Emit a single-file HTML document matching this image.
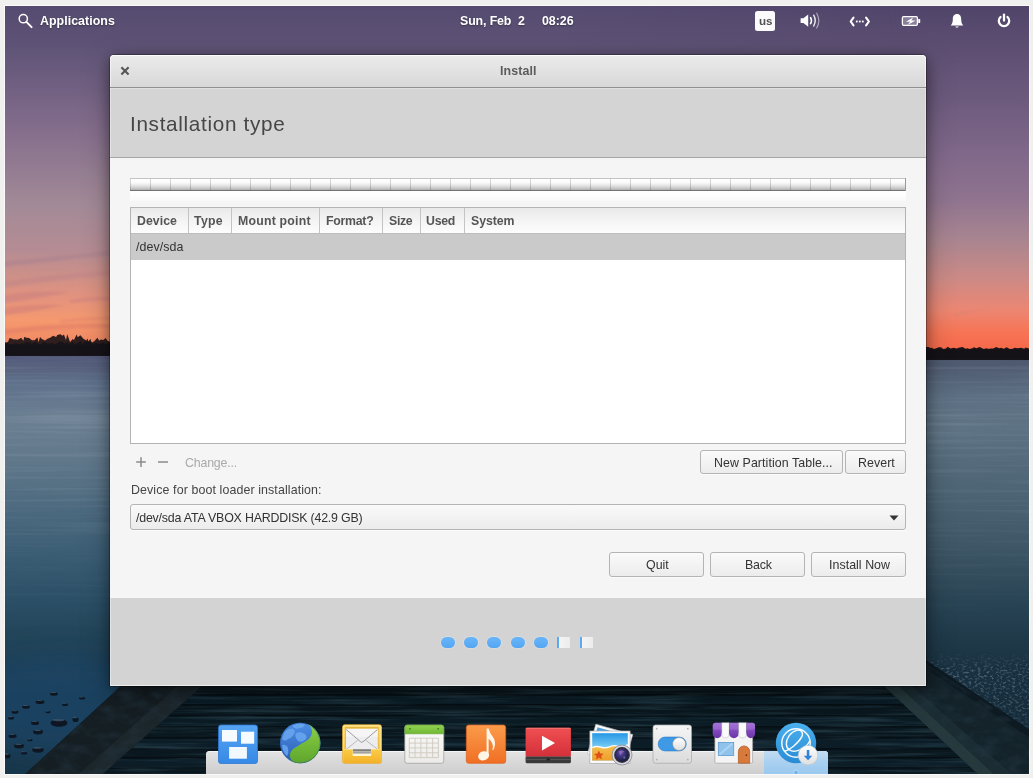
<!DOCTYPE html>
<html>
<head>
<meta charset="utf-8">
<title>Install</title>
<style>
html,body{margin:0;padding:0;}
body{width:1033px;height:778px;overflow:hidden;background:#f0f0ef;font-family:"Liberation Sans",sans-serif;position:relative;}
#desk{position:absolute;left:5px;top:6px;width:1024px;height:768px;overflow:hidden;background:#24384a;box-shadow:0 0 0 1px #fafafa;}
#in{position:absolute;left:-5px;top:-6px;width:1033px;height:778px;}
#wall{position:absolute;left:0;top:0;}
.abs{position:absolute;}
/* panel */
.ptext{position:absolute;color:#fff;font-weight:bold;font-size:12px;line-height:16px;white-space:nowrap;text-shadow:0 1px 2px rgba(0,0,0,.45);}
/* window */
#win{position:absolute;left:110px;top:55px;width:816px;height:631px;border-radius:4px 4px 1.5px 1.5px;background:#f5f5f5;box-shadow:0 0 0 1px rgba(0,0,0,.28),0 3px 14px rgba(0,0,0,.4),0 8px 30px rgba(0,0,0,.28);overflow:hidden;}
#tbar{position:absolute;left:0;top:0;width:816px;height:32px;background:linear-gradient(#ebebeb,#d8d8d8);border-bottom:1px solid #909090;box-sizing:content-box;box-shadow:inset 0 1px 0 #fcfcfc,inset 1px 0 0 rgba(255,255,255,.55),inset -1px 0 0 rgba(255,255,255,.55);border-radius:4px 4px 0 0;}
#head{position:absolute;left:0;top:33px;width:816px;height:69px;background:#d4d4d4;border-bottom:1px solid #a6a6a6;box-shadow:inset 0 1px 0 rgba(255,255,255,.25),inset 1px 0 0 rgba(255,255,255,.35),inset -1px 0 0 rgba(255,255,255,.35);}
#foot{position:absolute;left:0;top:543px;width:816px;height:88px;background:#d3d3d3;box-shadow:inset 0 -1px 0 rgba(255,255,255,.6),inset 1px 0 0 rgba(255,255,255,.4),inset -1px 0 0 rgba(255,255,255,.4);}
.t{position:absolute;white-space:nowrap;color:#333;font-size:12.5px;line-height:16px;will-change:transform;}
.btn{position:absolute;box-sizing:border-box;border:1px solid #b4b4b4;border-radius:3px;background:linear-gradient(#fafafa,#ececec);color:#333;font-size:12.5px;text-align:center;white-space:nowrap;box-shadow:0 1px 0 rgba(255,255,255,.6);}
</style>
</head>
<body>
<div id="desk"><div id="in">

<!-- WALLPAPER -->
<svg id="wall" width="1033" height="778" viewBox="0 0 1033 778">
<defs>
<linearGradient id="sky" gradientUnits="userSpaceOnUse" x1="0" y1="6" x2="0" y2="346">
<stop offset="0" stop-color="#554b70"/>
<stop offset="0.115" stop-color="#5e5376"/>
<stop offset="0.335" stop-color="#806a8a"/>
<stop offset="0.585" stop-color="#a28a97"/>
<stop offset="0.718" stop-color="#b58c94"/>
<stop offset="0.79" stop-color="#cc9088"/>
<stop offset="0.865" stop-color="#e6937d"/>
<stop offset="0.925" stop-color="#f5996e"/>
<stop offset="1" stop-color="#f28762"/>
</linearGradient>
<linearGradient id="skyR" gradientUnits="userSpaceOnUse" x1="0" y1="6" x2="0" y2="350">
<stop offset="0" stop-color="#50446a"/>
<stop offset="0.1" stop-color="#5b4d70"/>
<stop offset="0.27" stop-color="#6c5a7d"/>
<stop offset="0.45" stop-color="#826a8b"/>
<stop offset="0.565" stop-color="#90748f"/>
<stop offset="0.68" stop-color="#a98590"/>
<stop offset="0.795" stop-color="#cd8a85"/>
<stop offset="0.885" stop-color="#ec8672"/>
<stop offset="0.945" stop-color="#f67556"/>
<stop offset="1" stop-color="#f5694a"/>
</linearGradient>
<linearGradient id="rfade" x1="0" y1="0" x2="1" y2="0">
<stop offset="0" stop-color="#fff" stop-opacity="0"/>
<stop offset="0.55" stop-color="#fff" stop-opacity="0"/>
<stop offset="0.9" stop-color="#fff" stop-opacity="1"/>
</linearGradient>
<mask id="rmask"><rect x="0" y="0" width="1033" height="778" fill="url(#rfade)"/></mask>
<linearGradient id="water" gradientUnits="userSpaceOnUse" x1="0" y1="354" x2="0" y2="700">
<stop offset="0" stop-color="#52587a"/>
<stop offset="0.04" stop-color="#58627e"/>
<stop offset="0.08" stop-color="#5e708b"/>
<stop offset="0.19" stop-color="#6b7f92"/>
<stop offset="0.3" stop-color="#61788b"/>
<stop offset="0.42" stop-color="#506c81"/>
<stop offset="0.57" stop-color="#3c5e75"/>
<stop offset="0.71" stop-color="#2b4f66"/>
<stop offset="0.855" stop-color="#204155"/>
<stop offset="1" stop-color="#18364a"/>
</linearGradient>
<linearGradient id="waterR" gradientUnits="userSpaceOnUse" x1="0" y1="358" x2="0" y2="700">
<stop offset="0" stop-color="#4c566c"/>
<stop offset="0.12" stop-color="#5e7184"/>
<stop offset="0.21" stop-color="#5d7283"/>
<stop offset="0.415" stop-color="#4a6272"/>
<stop offset="0.56" stop-color="#3d5565"/>
<stop offset="0.71" stop-color="#294454"/>
<stop offset="0.825" stop-color="#1f3949"/>
<stop offset="1" stop-color="#172d3c"/>
</linearGradient>
<clipPath id="pclip"><polygon points="202,686 884,686 982,778 98,778"/></clipPath>
<filter id="blur1"><feGaussianBlur stdDeviation="1.2"/></filter>
<filter id="blur3" x="-50%" y="-50%" width="200%" height="200%"><feGaussianBlur stdDeviation="14"/></filter>
<filter id="blur05"><feGaussianBlur stdDeviation=".6"/></filter>
<filter id="wood" x="0" y="0" width="100%" height="100%">
<feTurbulence type="fractalNoise" baseFrequency="0.01 0.3" numOctaves="3" seed="9"/>
<feColorMatrix type="matrix" values="0 0 0 0 0.09  0 0 0 0 0.22  0 0 0 0 0.29  0 0 0 2.6 -1.15"/>
</filter>
<filter id="wood2" x="0" y="0" width="100%" height="100%">
<feTurbulence type="fractalNoise" baseFrequency="0.05 0.09" numOctaves="3" seed="3"/>
<feColorMatrix type="matrix" values="0 0 0 0 0.02  0 0 0 0 0.04  0 0 0 0 0.06  0 0 0 2.4 -1.0"/>
</filter>
<clipPath id="bclip"><polygon points="121,686 202,686 98,778 21,778"/><polygon points="884,686 920,686 920,660 1033,734 1033,778 982,778"/></clipPath>
<filter id="ripple" x="0" y="0" width="100%" height="100%">
<feTurbulence type="fractalNoise" baseFrequency="0.006 0.3" numOctaves="2" seed="21"/>
<feColorMatrix type="matrix" values="0 0 0 0 0.78  0 0 0 0 0.84  0 0 0 0 0.92  0 0 0 2.2 -1.0"/>
</filter>
<linearGradient id="ripfade" gradientUnits="userSpaceOnUse" x1="0" y1="356" x2="0" y2="640">
<stop offset="0" stop-color="#fff" stop-opacity=".9"/><stop offset=".5" stop-color="#fff" stop-opacity=".6"/><stop offset="1" stop-color="#fff" stop-opacity="0"/>
</linearGradient>
<mask id="ripmask"><rect x="0" y="356" width="1033" height="290" fill="url(#ripfade)"/></mask>
<filter id="blur2"><feGaussianBlur stdDeviation="2.5"/></filter>
<filter id="grain" x="0" y="0" width="100%" height="100%">
<feTurbulence type="fractalNoise" baseFrequency="0.32 0.5" numOctaves="2" seed="4" result="n"/>
<feColorMatrix type="matrix" values="0 0 0 0 0.42  0 0 0 0 0.53  0 0 0 0 0.64  0 0 0 3.2 -1.55"/>
</filter>
<linearGradient id="pebfade" gradientUnits="userSpaceOnUse" x1="0" y1="652" x2="0" y2="745">
<stop offset="0" stop-color="#fff" stop-opacity="0"/><stop offset=".22" stop-color="#fff" stop-opacity="1"/><stop offset=".6" stop-color="#fff" stop-opacity=".8"/><stop offset="1" stop-color="#fff" stop-opacity=".15"/>
</linearGradient>
<mask id="pebmask"><rect x="900" y="640" width="140" height="120" fill="url(#pebfade)"/></mask>
</defs>
<!-- sky -->
<rect x="0" y="0" width="1033" height="360" fill="url(#sky)"/>
<rect x="0" y="0" width="1033" height="360" fill="url(#skyR)" mask="url(#rmask)"/>
<!-- cloud streaks left -->
<g filter="url(#blur1)" opacity=".55">
<path d="M0 262 Q40 258 118 250 L118 254 Q50 262 0 267Z" fill="#a9828f"/>
<path d="M0 282 Q50 274 118 270 L118 274 Q60 280 0 288Z" fill="#c18589"/>
<path d="M0 296 Q30 290 70 292 Q40 298 0 304Z" fill="#c9807f"/>
<path d="M0 308 Q40 303 65 305 Q40 311 0 316Z" fill="#d27f78"/>
<path d="M70 300 Q95 296 118 297 L118 300 Q95 300 70 303Z" fill="#cf827c"/>
<path d="M0 330 Q60 322 118 324 L118 328 Q60 327 0 335Z" fill="#e07b68"/>
<path d="M60 320 Q90 316 118 317 L118 320 Q90 320 60 323Z" fill="#e5846e"/>
</g>
<path d="M955 314 Q975 309 990 308 Q975 311 955 316Z" fill="#d98273" opacity=".7" filter="url(#blur1)"/>
<!-- water -->
<rect x="0" y="352" width="1033" height="426" fill="url(#water)"/>
<rect x="0" y="352" width="1033" height="426" fill="url(#waterR)" mask="url(#rmask)"/>
<ellipse cx="60" cy="705" rx="110" ry="50" fill="#1b4a6e" opacity=".6" filter="url(#blur3)"/>
<g mask="url(#ripmask)"><rect x="0" y="356" width="120" height="290" filter="url(#ripple)" opacity=".16"/><rect x="915" y="356" width="118" height="290" filter="url(#ripple)" opacity=".13"/></g>
<!-- trees -->
<path d="M0 356 L0.0 341.8 L2.1 341.2 L4.3 339.9 L5.4 342.9 L8.1 341.7 L9.6 337.9 L11.5 338.5 L13.5 339.4 L14.8 339.3 L17.5 339.7 L20.0 338.5 L21.1 337.7 L23.3 340.8 L24.4 336.7 L26.3 337.7 L29.1 337.9 L31.9 340.3 L34.5 340.2 L37.4 337.5 L38.6 342.2 L40.0 337.0 L41.9 339.0 L43.5 339.7 L45.2 340.6 L47.4 338.8 L50.2 337.7 L53.1 335.8 L56.1 337.0 L57.4 335.1 L60.3 334.2 L62.5 335.8 L63.9 334.5 L66.0 340.1 L67.2 334.2 L70.1 342.1 L72.7 338.9 L74.0 340.1 L76.6 334.6 L77.7 337.2 L78.8 336.4 L80.4 335.2 L83.4 338.8 L86.4 340.6 L87.5 338.6 L88.6 341.6 L90.4 338.8 L91.7 342.7 L94.5 341.0 L97.4 337.7 L99.1 340.4 L101.2 339.5 L103.4 340.0 L105.6 338.1 L107.6 340.8 L110.1 341.8 L111.7 338.1 L113.7 340.2 L114.7 340.9 L116.9 342.9 L118 356 Z" fill="#1f1518" opacity=".93"/>
<path d="M0 356 L0.0 344.0 L2.3 344.2 L4.3 344.3 L5.5 342.3 L6.6 343.1 L8.1 343.5 L9.7 344.1 L11.9 344.3 L13.0 344.5 L14.3 343.5 L16.5 343.5 L17.5 343.8 L19.9 344.3 L21.7 343.3 L23.5 343.4 L25.4 342.9 L27.3 341.6 L29.0 344.1 L29.9 341.6 L31.5 343.9 L33.8 342.8 L35.8 342.0 L37.0 343.5 L39.2 344.1 L41.2 344.2 L43.1 342.5 L45.5 341.9 L47.1 343.9 L48.1 342.8 L49.7 344.3 L52.0 342.7 L53.9 343.7 L55.1 344.5 L56.4 343.4 L57.9 342.9 L60.0 340.7 L61.1 342.8 L62.2 341.6 L64.6 343.6 L66.6 343.1 L67.4 341.0 L68.7 343.7 L70.2 343.4 L71.7 342.5 L73.2 341.9 L74.4 344.1 L75.4 344.0 L77.0 343.0 L79.1 342.4 L81.0 340.7 L81.9 344.4 L83.0 343.1 L84.7 341.9 L86.0 341.2 L86.8 341.7 L88.0 341.7 L88.8 341.4 L90.8 341.5 L92.6 344.0 L94.9 343.3 L95.9 342.9 L97.5 343.3 L98.5 344.2 L100.2 343.4 L101.2 343.4 L103.2 342.8 L104.7 343.6 L106.1 344.0 L107.2 343.5 L108.2 342.8 L110.1 343.1 L111.0 343.7 L112.5 344.3 L114.8 342.8 L116.4 342.9 L117.5 344.0 L118 356 Z" fill="#17141a"/>
<rect x="0" y="345" width="118" height="10" fill="#151318"/>
<path d="M915 360 L915.0 347.6 L917.7 347.3 L920.9 347.4 L924.0 348.9 L926.2 346.9 L928.7 347.0 L930.0 348.0 L931.7 347.8 L934.0 349.0 L935.6 348.4 L938.7 347.3 L940.2 347.2 L941.6 347.6 L943.0 349.0 L946.0 348.5 L947.6 346.8 L950.6 348.4 L953.8 347.8 L956.4 348.5 L959.6 347.5 L962.8 347.0 L964.5 348.2 L966.0 348.7 L967.2 348.3 L969.7 349.0 L972.3 348.3 L974.0 347.2 L976.2 348.3 L978.4 347.4 L979.6 346.9 L980.7 347.4 L983.7 349.0 L986.5 348.2 L988.9 349.0 L990.1 348.6 L993.3 348.6 L996.1 347.0 L999.2 348.2 L1001.1 347.8 L1003.9 348.8 L1006.7 347.2 L1009.7 348.9 L1012.8 348.8 L1014.7 347.7 L1017.8 348.3 L1021.0 347.8 L1022.7 348.3 L1024.2 348.8 L1025.7 347.5 L1029.0 348.6 L1030.2 346.8 L1032.4 348.1 L1033 360 Z" fill="#1d1518"/>
<rect x="915" y="349.5" width="118" height="10" fill="#151217"/>
<!-- pebbles right -->
<g mask="url(#pebmask)"><rect x="926" y="650" width="110" height="96" fill="#152c3c" opacity=".45"/><rect x="926" y="650" width="110" height="96" filter="url(#grain)" opacity=".38"/></g>
<!-- rocks left -->
<g filter="url(#blur05)"><ellipse cx="54.0" cy="694.0" rx="4.0" ry="1.8" fill="#0b1722"/><ellipse cx="53.5" cy="692.6" rx="2.8" ry="0.5" fill="#5d7f99" opacity=".5"/><ellipse cx="40.0" cy="702.0" rx="4.5" ry="2.0" fill="#0b1722"/><ellipse cx="39.5" cy="700.5" rx="3.1" ry="0.6" fill="#5d7f99" opacity=".5"/><ellipse cx="65.0" cy="704.5" rx="3.0" ry="1.6" fill="#0b1722"/><ellipse cx="64.5" cy="703.3" rx="2.1" ry="0.5" fill="#5d7f99" opacity=".5"/><ellipse cx="82.0" cy="698.0" rx="3.0" ry="1.5" fill="#0b1722"/><ellipse cx="81.5" cy="696.9" rx="2.1" ry="0.5" fill="#5d7f99" opacity=".5"/><ellipse cx="26.0" cy="707.0" rx="4.0" ry="1.8" fill="#0b1722"/><ellipse cx="25.5" cy="705.6" rx="2.8" ry="0.5" fill="#5d7f99" opacity=".5"/><ellipse cx="15.0" cy="712.0" rx="3.5" ry="1.7" fill="#0b1722"/><ellipse cx="14.5" cy="710.7" rx="2.4" ry="0.5" fill="#5d7f99" opacity=".5"/><ellipse cx="59.0" cy="723.0" rx="8.5" ry="3.8" fill="#0b1722"/><ellipse cx="58.5" cy="720.1" rx="5.9" ry="1.1" fill="#5d7f99" opacity=".5"/><ellipse cx="75.5" cy="719.5" rx="3.0" ry="2.6" fill="#0b1722"/><ellipse cx="75.0" cy="717.5" rx="2.1" ry="0.8" fill="#5d7f99" opacity=".5"/><ellipse cx="11.0" cy="718.0" rx="3.0" ry="1.6" fill="#0b1722"/><ellipse cx="10.5" cy="716.8" rx="2.1" ry="0.5" fill="#5d7f99" opacity=".5"/><ellipse cx="35.0" cy="723.0" rx="4.0" ry="2.0" fill="#0b1722"/><ellipse cx="34.5" cy="721.5" rx="2.8" ry="0.6" fill="#5d7f99" opacity=".5"/><ellipse cx="38.0" cy="732.0" rx="5.0" ry="2.4" fill="#0b1722"/><ellipse cx="37.5" cy="730.2" rx="3.5" ry="0.7" fill="#5d7f99" opacity=".5"/><ellipse cx="12.6" cy="736.0" rx="4.0" ry="2.0" fill="#0b1722"/><ellipse cx="12.1" cy="734.5" rx="2.8" ry="0.6" fill="#5d7f99" opacity=".5"/><ellipse cx="19.0" cy="746.0" rx="5.0" ry="2.4" fill="#0b1722"/><ellipse cx="18.5" cy="744.2" rx="3.5" ry="0.7" fill="#5d7f99" opacity=".5"/><ellipse cx="38.0" cy="750.0" rx="6.0" ry="2.8" fill="#0b1722"/><ellipse cx="37.5" cy="747.9" rx="4.2" ry="0.8" fill="#5d7f99" opacity=".5"/><ellipse cx="7.5" cy="756.0" rx="3.0" ry="2.5" fill="#0b1722"/><ellipse cx="7.0" cy="754.1" rx="2.1" ry="0.8" fill="#5d7f99" opacity=".5"/><ellipse cx="24.0" cy="753.0" rx="3.0" ry="1.6" fill="#0b1722"/><ellipse cx="23.5" cy="751.8" rx="2.1" ry="0.5" fill="#5d7f99" opacity=".5"/><ellipse cx="48.0" cy="712.0" rx="2.5" ry="1.2" fill="#0b1722"/><ellipse cx="47.5" cy="711.1" rx="1.8" ry="0.5" fill="#5d7f99" opacity=".5"/><ellipse cx="30.0" cy="740.0" rx="2.5" ry="1.3" fill="#0b1722"/><ellipse cx="29.5" cy="739.0" rx="1.8" ry="0.5" fill="#5d7f99" opacity=".5"/></g>
<!-- pier -->
<polygon points="121,686 930,686 1033,736 1033,778 21,778" fill="#0b171d"/>
<g clip-path="url(#pclip)">
<rect x="90" y="686" width="900" height="92" fill="#0a171e"/>
<rect x="90" y="696" width="900" height="8" fill="#0d212b" opacity=".55"/>
<rect x="90" y="717" width="900" height="9" fill="#0d222c" opacity=".5"/>
<rect x="90" y="739" width="900" height="9" fill="#0d242f" opacity=".5"/>
<rect x="90" y="759" width="900" height="8" fill="#0d242f" opacity=".5"/>
<rect x="90" y="694" width="900" height="1.4" fill="#03080b" opacity=".55"/><rect x="90" y="704" width="900" height="1.4" fill="#03080b" opacity=".55"/><rect x="90" y="715" width="900" height="1.4" fill="#03080b" opacity=".55"/><rect x="90" y="726" width="900" height="1.4" fill="#03080b" opacity=".55"/><rect x="90" y="737" width="900" height="1.4" fill="#03080b" opacity=".55"/><rect x="90" y="748" width="900" height="1.4" fill="#03080b" opacity=".55"/><rect x="90" y="757" width="900" height="1.4" fill="#03080b" opacity=".55"/><rect x="90" y="767" width="900" height="1.4" fill="#03080b" opacity=".55"/>
<rect x="90" y="686" width="900" height="92" filter="url(#wood)" opacity=".28"/>
</g>
<!-- left beam -->
<polygon points="121,686 202,686 98,778 21,778" fill="#151e23"/>
<polygon points="178,686 202,686 98,778 74,778" fill="#1c272c"/>
<!-- right beam -->
<polygon points="884,686 920,686 920,660 926,662 1033,734 1033,778 982,778" fill="#14232a"/>
<polygon points="884,686 899,686 998,778 982,778" fill="#263a3d"/>
<polygon points="899,686 912,686 1016,778 998,778" fill="#1b2d33"/>
<polygon points="920,656 1033,732 1033,740 920,665" fill="#0d1a22"/>
<g clip-path="url(#bclip)"><rect x="0" y="650" width="1033" height="128" filter="url(#wood2)" opacity=".5"/></g>
</svg>

<!-- PANEL -->
<svg class="abs" style="left:0;top:0" width="1033" height="40" viewBox="0 0 1033 40">
<g fill="none" stroke="#fff" stroke-linecap="round">
<!-- search -->
<circle cx="23.3" cy="18.7" r="4.1" stroke-width="1.5"/>
<path d="M26.4 21.9 L31.6 27.1" stroke-width="2"/>
</g>
<!-- us -->
<rect x="755" y="11" width="20" height="20" rx="2.5" fill="#fbfbfb"/>
<!-- volume -->
<g fill="#fff">
<path d="M800.6 18.2 h2.8 l4.8 -3.8 v12.4 l-4.8 -3.8 h-2.8z"/>
</g>
<g fill="none" stroke="#fff" stroke-linecap="round">
<path d="M810.6 17.6 q1.7 3 0 6" stroke-width="1.6"/>
<path d="M813.7 15.2 q3 5.4 0 10.8" stroke-width="1.5" opacity=".85"/>
<path d="M816.7 13.2 q4.2 7.4 0 14.8" stroke-width="1.2" opacity=".5"/>
</g>
<!-- network -->
<g fill="none" stroke="#fff" stroke-width="2.1" stroke-linecap="round" stroke-linejoin="round">
<path d="M853.5 17.6 L850.7 21.5 L853.5 25.4"/>
<path d="M866.1 17.6 L868.9 21.5 L866.1 25.4"/>
</g>
<g fill="#fff"><rect x="855.9" y="20.6" width="1.8" height="1.8"/><rect x="858.9" y="20.6" width="1.8" height="1.8"/><rect x="861.9" y="20.6" width="1.8" height="1.8"/></g>
<!-- battery -->
<rect x="902.4" y="16.7" width="15" height="8.6" rx="1.2" fill="#fff" fill-opacity=".3" stroke="#fff" stroke-width="1.3"/>
<rect x="918.2" y="18.9" width="2" height="4.2" rx=".7" fill="#fff"/>
<path d="M913.3 17.2 L906 21.7 h4.2 l-2.7 3.4 L915.6 20.5 h-4.300z" fill="#fff"/>
<!-- bell -->
<path d="M957 14 c-3 0 -4.2 2.4 -4.2 5.2 c0 3.4 -0.8 4.6 -2 6.2 h12.4 c-1.2 -1.6 -2 -2.8 -2 -6.2 c0 -2.8 -1.2 -5.2 -4.2 -5.200z" fill="#fff"/>
<path d="M955.2 26.6 a1.9 1.7 0 0 0 3.6 0z" fill="#fff"/>
<!-- power -->
<g fill="none" stroke="#fff" stroke-width="2.3" stroke-linecap="round">
<path d="M1000.5 17 a5.2 5.2 0 1 0 7 0"/>
<path d="M1004 14.6 v6"/>
</g>
</svg>
<div class="t" style="left:40.4px;top:12.5px;font-size:12.4px;font-weight:bold;color:#fff;text-shadow:0 1px 2px rgba(0,0,0,.4);letter-spacing:0.04px;">Applications</div>
<div class="t" style="left:460.2px;top:12.6px;font-size:12.4px;font-weight:bold;color:#fff;text-shadow:0 1px 2px rgba(0,0,0,.4);letter-spacing:-0.13px;">Sun, Feb&nbsp;&nbsp;2</div>
<div class="t" style="left:542.4px;top:12.6px;font-size:12.4px;font-weight:bold;color:#fff;text-shadow:0 1px 2px rgba(0,0,0,.4);letter-spacing:-0.03px;">08:26</div>
<div class="t" style="left:758.6px;top:13.2px;font-size:11.6px;font-weight:bold;color:#505050;">us</div>

<!-- WINDOW -->
<div id="win">
 <div id="tbar"></div>
 <div id="head"></div>
 <div id="foot"></div>
</div>
<svg class="abs" style="left:120px;top:66px" width="10" height="10" viewBox="0 0 10 10"><path d="M1.4 1.3 L8.6 8.5 M8.6 1.3 L1.4 8.5" stroke="#555" stroke-width="2.1" fill="none"/></svg>
<div class="t" style="left:499.8px;top:63.4px;font-size:12.4px;font-weight:bold;color:#5c5c5c;letter-spacing:0.12px;">Install</div>
<div class="t" style="left:130.1px;top:109.8px;font-size:20.7px;line-height:28px;letter-spacing:.68px;color:#464646;">Installation type</div>
<div class="abs" style="left:130px;top:191px;width:776px;height:10px;background:linear-gradient(#fff,#fcfcfc 60%,#f8f8f8);"></div>
<div class="abs" style="left:130px;top:178px;width:776px;height:13px;box-sizing:border-box;border-top:1px solid #c4c4c4;border-bottom:1px solid #727272;background:repeating-linear-gradient(90deg,rgba(0,0,0,.16) 0,rgba(0,0,0,.16) 1px,transparent 1px,transparent 20px),linear-gradient(#ffffff,#fafafa 35%,#dadada 70%,#b2b2b2);"></div>
<div class="abs" style="left:905px;top:178px;width:1px;height:13px;background:#999;"></div>
<div class="abs" style="left:130px;top:207px;width:776px;height:237px;box-sizing:border-box;border:1px solid #b3b3b3;background:#fff;"></div>
<div class="abs" style="left:131px;top:208px;width:774px;height:25px;background:linear-gradient(#e9e9e9,#f3f3f3 45%,#fdfdfd);border-bottom:1px solid #bdbdbd;"></div>
<div class="abs" style="left:131px;top:234px;width:774px;height:26px;background:#cacaca;"></div>
<div class="abs" style="left:188px;top:208px;width:1px;height:25px;background:#c4c4c4;"></div>
<div class="abs" style="left:231px;top:208px;width:1px;height:25px;background:#c4c4c4;"></div>
<div class="abs" style="left:319px;top:208px;width:1px;height:25px;background:#c4c4c4;"></div>
<div class="abs" style="left:382px;top:208px;width:1px;height:25px;background:#c4c4c4;"></div>
<div class="abs" style="left:420px;top:208px;width:1px;height:25px;background:#c4c4c4;"></div>
<div class="abs" style="left:464px;top:208px;width:1px;height:25px;background:#c4c4c4;"></div>
<div class="t" style="left:136.7px;top:212.6px;font-size:12.3px;font-weight:bold;color:#555;letter-spacing:0.05px;">Device</div>
<div class="t" style="left:194.4px;top:212.6px;font-size:12.3px;font-weight:bold;color:#555;letter-spacing:0.30px;">Type</div>
<div class="t" style="left:237.8px;top:212.7px;font-size:12.3px;font-weight:bold;color:#555;letter-spacing:0.22px;">Mount point</div>
<div class="t" style="left:325.6px;top:212.6px;font-size:12.3px;font-weight:bold;color:#555;letter-spacing:-0.25px;">Format?</div>
<div class="t" style="left:388.5px;top:212.6px;font-size:12.3px;font-weight:bold;color:#555;letter-spacing:-0.30px;">Size</div>
<div class="t" style="left:426.4px;top:212.6px;font-size:12.3px;font-weight:bold;color:#555;letter-spacing:-0.25px;">Used</div>
<div class="t" style="left:470.5px;top:212.6px;font-size:12.3px;font-weight:bold;color:#555;letter-spacing:-0.05px;">System</div>
<div class="t" style="left:136.1px;top:238.7px;font-size:12.4px;font-weight:normal;color:#333;letter-spacing:0.07px;">/dev/sda</div>
<svg class="abs" style="left:134px;top:455px" width="40" height="14" viewBox="0 0 40 14"><path d="M7 2.3 v9.6 M2.2 7.1 h9.6 M24 7.1 h10" stroke="#8a8a8a" stroke-width="1.5" fill="none"/></svg>
<div class="t" style="left:184.7px;top:454.6px;font-size:12.4px;font-weight:normal;color:#aaa;letter-spacing:-0.20px;">Change...</div>
<div class="t" style="left:130.5px;top:481.8px;font-size:12.4px;font-weight:normal;color:#444;letter-spacing:0.11px;">Device for boot loader installation:</div>
<div class="btn" style="left:700px;top:450px;width:143px;height:24px;"></div>
<div class="btn" style="left:845px;top:450px;width:61px;height:24px;"></div>
<div class="t" style="left:713.5px;top:454.6px;font-size:12.4px;font-weight:normal;color:#333;letter-spacing:0.08px;">New Partition Table...</div>
<div class="t" style="left:857.7px;top:454.6px;font-size:12.4px;font-weight:normal;color:#333;letter-spacing:0.06px;">Revert</div>
<div class="btn" style="left:130px;top:504px;width:776px;height:26px;"></div>
<div class="t" style="left:135.6px;top:510.0px;font-size:12.4px;font-weight:normal;color:#333;letter-spacing:-0.20px;">/dev/sda ATA VBOX HARDDISK (42.9 GB)</div>
<svg class="abs" style="left:888px;top:513.5px" width="12" height="8" viewBox="0 0 12 8"><path d="M1.5 1.5 h9 l-4.5 5z" fill="#333"/></svg>
<div class="btn" style="left:609px;top:552px;width:95px;height:25px;"></div>
<div class="btn" style="left:710px;top:552px;width:95px;height:25px;"></div>
<div class="btn" style="left:811px;top:552px;width:95px;height:25px;"></div>
<div class="t" style="left:645.7px;top:556.7px;font-size:12.4px;font-weight:normal;color:#333;letter-spacing:0.00px;">Quit</div>
<div class="t" style="left:744.9px;top:556.7px;font-size:12.4px;font-weight:normal;color:#333;letter-spacing:-0.20px;">Back</div>
<div class="t" style="left:828.7px;top:556.7px;font-size:12.4px;font-weight:normal;color:#333;letter-spacing:0.04px;">Install Now</div>
<div class="abs" style="left:441.0px;top:636.5px;width:14px;height:11px;border-radius:5.5px/5.5px;background:linear-gradient(#69b5fa,#54a6f2);box-shadow:0 0 1.5px rgba(255,255,255,.9);"></div>
<div class="abs" style="left:464.0px;top:636.5px;width:14px;height:11px;border-radius:5.5px/5.5px;background:linear-gradient(#69b5fa,#54a6f2);box-shadow:0 0 1.5px rgba(255,255,255,.9);"></div>
<div class="abs" style="left:487.3px;top:636.5px;width:14px;height:11px;border-radius:5.5px/5.5px;background:linear-gradient(#69b5fa,#54a6f2);box-shadow:0 0 1.5px rgba(255,255,255,.9);"></div>
<div class="abs" style="left:510.5px;top:636.5px;width:14px;height:11px;border-radius:5.5px/5.5px;background:linear-gradient(#69b5fa,#54a6f2);box-shadow:0 0 1.5px rgba(255,255,255,.9);"></div>
<div class="abs" style="left:533.7px;top:636.5px;width:14px;height:11px;border-radius:5.5px/5.5px;background:linear-gradient(#69b5fa,#54a6f2);box-shadow:0 0 1.5px rgba(255,255,255,.9);"></div>
<div class="abs" style="left:557.0px;top:636.5px;width:12.5px;height:11px;background:linear-gradient(90deg,#5aa9f2 0,#5aa9f2 1.5px,#f4f4f4 2px,#ececec);"></div>
<div class="abs" style="left:580.0px;top:636.5px;width:12.5px;height:11px;background:linear-gradient(90deg,#5aa9f2 0,#5aa9f2 1.5px,#f4f4f4 2px,#ececec);"></div>

<!-- DOCK -->
<div id="dock" class="abs" style="left:206px;top:751px;width:622px;height:23px;background:linear-gradient(#e4e4e4,#dadada 40%,#cecece);border-radius:3.5px 3.5px 0 0;box-shadow:inset 0 1px 0 rgba(255,255,255,.6);"></div>
<div class="abs" style="left:764px;top:751px;width:64px;height:23px;background:linear-gradient(#c3dcf2,#a9d0f0 50%,#9ac8ee);border-radius:0 3.5px 0 0;"></div>
<div class="abs" style="left:794.2px;top:771px;width:3.4px;height:3.4px;border-radius:2px;background:#6fb2ee;box-shadow:0 0 2px #fff;"></div>
<svg class="abs" style="left:200px;top:715px" width="640" height="63" viewBox="200 715 640 63">
<defs>
<linearGradient id="gBlue" x1="0" y1="0" x2="0" y2="1"><stop offset="0" stop-color="#55a5f3"/><stop offset="1" stop-color="#3689e6"/></linearGradient>
<linearGradient id="gGlobe" x1="0" y1="0" x2="0" y2="1"><stop offset="0" stop-color="#4d8fe6"/><stop offset="1" stop-color="#2a5eb3"/></linearGradient>
<linearGradient id="gGreen" x1="0" y1="0" x2="0" y2="1"><stop offset="0" stop-color="#8bd046"/><stop offset="1" stop-color="#5ea52c"/></linearGradient>
<linearGradient id="gYel" x1="0" y1="0" x2="0" y2="1"><stop offset="0" stop-color="#fddc74"/><stop offset="1" stop-color="#f6bd35"/></linearGradient>
<linearGradient id="gYel2" x1="0" y1="0" x2="0" y2="1"><stop offset="0" stop-color="#fbcc45"/><stop offset="1" stop-color="#f3b22a"/></linearGradient>
<linearGradient id="gCalG" x1="0" y1="0" x2="0" y2="1"><stop offset="0" stop-color="#94d353"/><stop offset="1" stop-color="#6fb832"/></linearGradient>
<linearGradient id="gCalW" x1="0" y1="0" x2="0" y2="1"><stop offset="0" stop-color="#fbfbfa"/><stop offset="1" stop-color="#ecebe8"/></linearGradient>
<linearGradient id="gOr" x1="0" y1="0" x2="0" y2="1"><stop offset="0" stop-color="#fb9b4b"/><stop offset="1" stop-color="#f06f24"/></linearGradient>
<linearGradient id="gRed" x1="0" y1="0" x2="0" y2="1"><stop offset="0" stop-color="#ef4f52"/><stop offset="1" stop-color="#d42f39"/></linearGradient>
<linearGradient id="gSky" x1="0" y1="0" x2="0" y2="1"><stop offset="0" stop-color="#2598e6"/><stop offset=".55" stop-color="#7fcff5"/><stop offset="1" stop-color="#9ad8f6"/></linearGradient>
<linearGradient id="gSand" x1="0" y1="0" x2="0" y2="1"><stop offset="0" stop-color="#f7c14e"/><stop offset="1" stop-color="#ee9d2a"/></linearGradient>
<linearGradient id="gSw" x1="0" y1="0" x2="0" y2="1"><stop offset="0" stop-color="#f6f6f6"/><stop offset="1" stop-color="#dbdbdb"/></linearGradient>
<linearGradient id="gPur" x1="0" y1="0" x2="0" y2="1"><stop offset="0" stop-color="#9a5fd6"/><stop offset="1" stop-color="#6a34a6"/></linearGradient>
<linearGradient id="gWh" x1="0" y1="0" x2="0" y2="1"><stop offset="0" stop-color="#ffffff"/><stop offset="1" stop-color="#dedede"/></linearGradient>
<linearGradient id="gInst" x1="0" y1="0" x2="0" y2="1"><stop offset="0" stop-color="#4bb0ee"/><stop offset="1" stop-color="#2a8bd4"/></linearGradient>
<radialGradient id="gLens" cx=".4" cy=".35" r=".7"><stop offset="0" stop-color="#5b4ea8"/><stop offset=".6" stop-color="#2f2a66"/><stop offset="1" stop-color="#1b1838"/></radialGradient>
<clipPath id="globeClip"><circle cx="300.2" cy="743.0" r="20.2"/></clipPath>
</defs>

<!-- 1 multitasking -->
<rect x="218.5" y="725" width="39" height="38.5" rx="2.5" fill="url(#gBlue)" stroke="#2f78d4" stroke-width=".8"/>
<rect x="222" y="730" width="15" height="11.6" fill="#f6fbff"/>
<rect x="241" y="731.7" width="13.2" height="12" fill="#f6fbff"/>
<rect x="229.1" y="747" width="17.8" height="11.7" fill="#f1f8ff"/>

<!-- 2 midori -->
<circle cx="300.2" cy="743.0" r="20.2" fill="url(#gGlobe)"/>
<g clip-path="url(#globeClip)" fill="#6aa7f0" opacity=".85">
<path d="M284 733 q4 -5 9 -4 q3 2 1 5 q-2 4 -6 5 q-3 3 -6 0z"/>
<path d="M293 725 q6 -3 12 -1 q-1 4 -5 4 q-4 2 -7 -1z"/>
<path d="M296 733 q5 -2 9 1 q3 3 0 6 q-4 3 -7 1 q-4 -4 -2 -8z"/>
<path d="M282 745 q4 -1 6 3 q1 5 -1 8 q-4 -3 -5 -11z"/>
</g>
<path d="M307.2 724.1 C311.8 726.8 313.8 732.2 310.4 737 C307.4 741.2 302.5 742.6 299.3 745 C296 747.5 291.2 748.6 290.1 754 C289.5 757.2 290.6 759.8 293 761.9 A20.2 20.2 0 0 0 320.4 743 A20.2 20.2 0 0 0 307.2 724.1 Z" fill="url(#gGreen)"/>
<circle cx="300.2" cy="743.0" r="19.8" fill="none" stroke="#1f4f9c" stroke-opacity=".45" stroke-width=".8"/>

<!-- 3 mail -->
<rect x="342.6" y="724.8" width="38.9" height="38.5" rx="2" fill="url(#gYel)" stroke="#e4a82c" stroke-width=".8"/>
<rect x="343.4" y="725.6" width="37.3" height="36.9" rx="1.5" fill="none" stroke="#fde592" stroke-width=".9"/>
<rect x="345.2" y="727" width="33.4" height="22.5" fill="#e6b43c"/>
<rect x="346" y="728.8" width="31.8" height="20.5" fill="#ededef"/>
<rect x="346" y="728.8" width="31.8" height="8" fill="#f6f6f7" opacity=".8"/>
<path d="M346.3 729.6 L360.6 741.8 q1.2 .9 2.4 0 L377.5 729.6" fill="none" stroke="#9c9c9c" stroke-width="1"/>
<path d="M346.5 749 L357.6 740.4 M377.3 749 L366 740.4" stroke="#b4b4b4" stroke-width=".9" fill="none"/>
<rect x="343.2" y="749" width="37.7" height="14" fill="url(#gYel2)"/>
<rect x="343.2" y="749" width="37.7" height="1" fill="#fcdc7c"/>
<rect x="352.6" y="749" width="18.6" height="7" rx=".8" fill="#fff6d8"/>
<rect x="352.9" y="749.2" width="18" height="2.2" fill="#7f7f7f"/>
<rect x="352.9" y="751.5" width="18" height="2.1" fill="#a2a2a2"/>

<!-- 4 calendar -->
<rect x="404.8" y="725" width="39" height="38.3" rx="2.5" fill="url(#gCalW)" stroke="#9a9a96" stroke-width=".7"/>
<path d="M404.8 733.8 v-6.3 q0 -2.5 2.5 -2.5 h34 q2.5 0 2.5 2.5 v6.300z" fill="url(#gCalG)" stroke="#5d9e28" stroke-width=".6"/>
<circle cx="410" cy="728.8" r=".9" fill="#3f7a1a"/><circle cx="438.2" cy="728.8" r=".9" fill="#3f7a1a"/>
<g stroke="#cfc8bf" stroke-width=".9" fill="none"><path d="M409.3 738.2 V757.6"/><path d="M415.1 738.2 V757.6"/><path d="M420.9 738.2 V757.6"/><path d="M426.8 738.2 V757.6"/><path d="M432.6 738.2 V757.6"/><path d="M438.4 738.2 V757.6"/><path d="M409.3 738.2 H438.4"/><path d="M409.3 743.1 H438.4"/><path d="M409.3 747.9 H438.4"/><path d="M409.3 752.8 H438.4"/><path d="M409.3 757.6 H438.4"/></g>

<!-- 5 music -->
<rect x="466.3" y="725" width="39.4" height="38.3" rx="2.5" fill="url(#gOr)" stroke="#e0601a" stroke-width=".7"/>
<ellipse cx="483.6" cy="755.8" rx="5.6" ry="4.5" transform="rotate(-20 483.6 755.8)" fill="#fff5e6"/>
<path d="M486.6 755 V728.4 h2 q1 4.5 4 8 q4 5 1.5 12 q-.6 1.6 -1.8 1.8 q1.5 -5 -1 -8.5 q-1.5 -2.3 -2.7 -2.7 V755z" fill="#fff5e6"/>

<!-- 6 videos -->
<rect x="525.6" y="727.8" width="45.3" height="29" rx="1.5" fill="url(#gRed)"/>
<rect x="525.6" y="727.8" width="45.3" height="1" rx=".5" fill="#f58a86" opacity=".7"/>
<path d="M525.6 756.5 h45.3 v5.3 q0 1.5 -1.5 1.5 h-42.3 q-1.5 0 -1.5 -1.500z" fill="#3a3a3a"/>
<rect x="525.6" y="759" width="45.3" height=".8" fill="#5a5a5a"/>
<rect x="546.5" y="758.6" width="3.5" height="1.8" rx=".8" fill="#222"/>
<path d="M542 735.8 L555 743.1 L542 750.4Z" fill="#fff"/>

<!-- 7 photos -->
<g transform="translate(595.8 724.2) rotate(15.7)">
<rect x="0" y="0" width="38.4" height="31" fill="#fafafa" stroke="#b9b9b9" stroke-width=".6"/>
<rect x="2.4" y="2.4" width="33.6" height="26.2" fill="#4f9fdc"/>
</g>
<rect x="589.9" y="731" width="40.2" height="32.3" fill="#fcfcfc" stroke="#a9a9a9" stroke-width=".7"/>
<rect x="592.2" y="733.2" width="35.6" height="27.4" fill="url(#gSky)"/>
<path d="M592.2 747.6 q4 -1.8 8 -.6 q5 1.8 10 -.4 q4 -1.8 8 -.2 q5 1.6 9.6 -1.8 V760.6 H592.2z" fill="url(#gSand)"/>
<path d="M592.2 747.6 q4 -1.8 8 -.6 q5 1.8 10 -.4 q4 -1.8 8 -.2 q5 1.6 9.6 -1.8" fill="none" stroke="#fff" stroke-width="1.4" opacity=".9"/>
<path d="M598.9 750.4 l1.4 3 l3.3 .4 l-2.4 2.2 l.7 3.3 l-3 -1.7 l-2.9 1.8 l.6 -3.3 l-2.5 -2.2 l3.4 -.5z" fill="#dc4f18"/>
<circle cx="622" cy="755" r="10" fill="#d6d6de" stroke="#8a8a96" stroke-width=".8"/>
<circle cx="622" cy="755" r="7.9" fill="#2c2c3c"/>
<circle cx="622" cy="755" r="6.3" fill="url(#gLens)"/>
<path d="M618.5 751.5 q3 -2 6 .5 q-3 .2 -4 3.500z" fill="#c07fd8" opacity=".55"/>
<circle cx="624.3" cy="757.6" r="1.1" fill="#7ea0e8" opacity=".6"/>

<!-- 8 switchboard -->
<rect x="653" y="725" width="38.5" height="38.3" rx="2.5" fill="url(#gSw)" stroke="#a8a8a8" stroke-width=".7"/>
<g fill="#b0b0b0"><circle cx="656.7" cy="728.7" r=".9"/><circle cx="687.8" cy="728.7" r=".9"/><circle cx="656.7" cy="759.6" r=".9"/><circle cx="687.8" cy="759.6" r=".9"/></g>
<rect x="658.2" y="737.1" width="28" height="13.8" rx="6.9" fill="#3f9ae6" stroke="#2d7fcc" stroke-width=".7"/>
<circle cx="679.1" cy="744" r="6.5" fill="url(#gWh)" stroke="#8c8c8c" stroke-width=".6"/>

<!-- 9 appcenter -->
<rect x="714.9" y="733" width="37.7" height="30.2" rx="1.2" fill="#f4f4f4" stroke="#a3a3a3" stroke-width=".7"/>
<g>
<path d="M712.7 725.6 q0 -2.9 3 -2.9 h6.1 v10.9 a4.55 4.6 0 0 1 -9.1 0z" fill="url(#gPur)"/>
<path d="M721.8 722.7 h7.3 v10.9 a3.65 4.3 0 0 1 -7.3 0z" fill="#fafafa" stroke="#b9b9c4" stroke-width=".5"/>
<path d="M729.1 722.7 h9.6 v10.9 a4.80 4.6 0 0 1 -9.6 0z" fill="url(#gPur)"/>
<path d="M738.7 722.7 h7.7 v10.9 a3.85 4.3 0 0 1 -7.7 0z" fill="#fafafa" stroke="#b9b9c4" stroke-width=".5"/>
<path d="M746.4 722.7 h5.7 q3 0 3 2.9 v8.0 a4.35 4.6 0 0 1 -8.7 0z" fill="url(#gPur)"/>
</g>
<rect x="712.7" y="722.7" width="42.4" height="7" rx="2.5" fill="#fff" opacity=".12"/>
<rect x="718.3" y="742.5" width="15.4" height="13" fill="#8fc3ec" stroke="#5e9bd0" stroke-width=".8"/>
<path d="M719.5 754.5 L732.5 743.5" stroke="#b9dbf5" stroke-width="2.2" opacity=".7"/>
<path d="M738.4 763.2 V751.6 a5.650 5.650 0 0 1 11.3 0 V763.2z" fill="#d9793c" stroke="#a9591f" stroke-width=".7"/>
<circle cx="746.4" cy="755.2" r=".85" fill="#6b3210"/>

<!-- 10 installer -->
<circle cx="796" cy="743" r="20.2" fill="url(#gInst)"/>
<g fill="none" stroke="#fff" stroke-width="1.45" stroke-linecap="round" opacity=".95">
<circle cx="796" cy="743" r="14.2"/>
<path d="M784.6 751.3 Q789.5 750 793.8 746 C800 740.5 804 735.5 802 732 C800 728.6 793.5 729.8 789.2 735.6 C785.2 741.2 785.4 747.4 789.6 750 C793 752.4 800 751 805 747 Q808 744.5 809.8 741"/>
</g>
<circle cx="808" cy="755.2" r="9.8" fill="url(#gWh)" stroke="#b9c6d2" stroke-width=".6"/>
<path d="M806.8 750 h2.5 v5.8 h3 l-4.250 4.5 l-4.250 -4.5 h3z" fill="#2f83da"/>
</svg>

</div></div>
</body>
</html>
